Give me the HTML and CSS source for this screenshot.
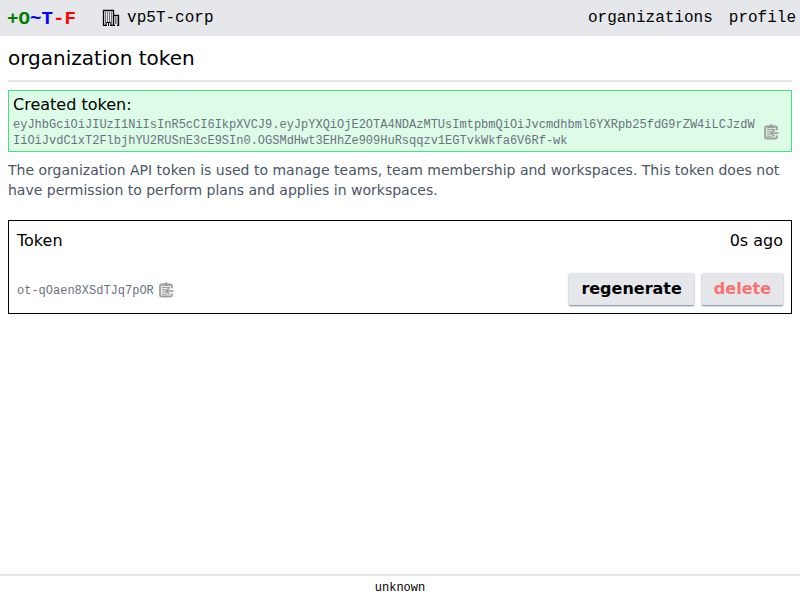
FILE: index.html
```html
<!DOCTYPE html>
<html lang="en">
<head>
<meta charset="utf-8">
<title>organization token</title>
<link rel="stylesheet" href="styles.css">
</head>
<body>
<svg width="0" height="0" class="sprite">
  <symbol id="clipboard" viewBox="0 0 16 16">
    <path d="M13 6V4Q13 2.500 11.500 2.500H2.500Q1 2.500 1 4V13Q1 14.500 2.500 14.500H11.500Q13 14.500 13 13V11.500" fill="currentColor" fill-opacity=".2" stroke="currentColor" stroke-width="1.800"/>
    <path d="M3.500 4V1.700H5.300Q7-1 8.700 1.700H10.500V4ZM3 5H11V6H3ZM3 7.200H7V8.200H3ZM3 9.500H7V10.500H3ZM3 11.700H8V12.700H3Z" fill="currentColor"/>
    <path d="M14.800 9H7.500M10.300 5.800L7 9L10.300 12.200" fill="none" stroke="currentColor" stroke-width="1.500"/>
  </symbol>
</svg>
<header class="header">
  <a class="logo"><span class="add">+O</span><span class="change">~T</span><span class="remove">-F</span></a>
  <div class="org">
    <svg class="building" viewBox="0 0 18 18">
      <path d="M1.500 17V1.500H11.500V17M11.500 6.500H16.500V17" fill="none" stroke="#000" stroke-width="1.300"/>
      <path d="M1 15.800H5V17H1ZM8 15.800H13V17H8ZM15 15.800H17V17H15ZM3.500 13H9.500V17H8.500V14H7V17H6V14H4.500V17H3.500Z"/>
      <path d="M3.500 3.500V12.500M5.500 3.500V12.500M7.500 3.500V12.500M9.500 3.500V12.500M13.500 8.500V15M15 8.500V15" fill="none" stroke="#000" stroke-width="1" stroke-dasharray="1 1"/>
    </svg>
    <span>vp5T-corp</span>
  </div>
  <nav class="nav"><a>organizations</a><a>profile</a></nav>
</header>
<main class="main">
  <h1 class="title">organization token</h1>
  <section class="flash">
    <div>Created token:</div>
    <div class="flash-row">
      <span class="token">eyJhbGciOiJIUzI1NiIsInR5cCI6IkpXVCJ9.eyJpYXQiOjE2OTA4NDAzMTUsImtpbmQiOiJvcmdhbml6YXRpb25fdG9rZW4iLCJzdWIiOiJvdC1xT2FlbjhYU2RUSnE3cE9SIn0.OGSMdHwt3EHhZe909HuRsqqzv1EGTvkWkfa6V6Rf-wk</span>
      <svg class="copy"><use href="#clipboard"/></svg>
    </div>
  </section>
  <p class="description">The organization API token is used to manage teams, team membership and workspaces. This token does not have permission to perform plans and applies in workspaces.</p>
  <section class="card">
    <div class="row"><span>Token</span><span>0s ago</span></div>
    <div class="row">
      <div class="id"><span class="token">ot-qOaen8XSdTJq7pOR</span><svg class="copy"><use href="#clipboard"/></svg></div>
      <div class="actions"><button class="btn">regenerate</button><button class="btn danger">delete</button></div>
    </div>
  </section>
</main>
<footer class="footer">unknown</footer>
</body>
</html>
```
FILE: styles.css
```css
* { box-sizing: border-box; }
body {
  margin: 0;
  min-height: 100vh;
  display: flex;
  flex-direction: column;
  font: 16px/24px "DejaVu Sans", sans-serif;
  color: #000;
  background: #fff;
}
.sprite { position: absolute; }
.header {
  height: 36px;
  display: flex;
  align-items: center;
  padding: 0 4px 0 7px;
  background: #e5e7eb;
  font-family: "Liberation Mono", monospace;
}
.logo { font-size: 19.2px; font-weight: 700; padding-top: 2px; }
.add { color: green; }
.change { color: blue; }
.remove { color: red; }
.org { display: flex; align-items: center; gap: 7px; margin-left: 26px; }
.building { width: 18px; height: 18px; }
.nav { display: flex; gap: 16px; margin-left: auto; }
.main { flex: 1; padding: 8px; }
.title {
  margin: 0 0 8px;
  padding-bottom: 8px;
  border-bottom: 2px solid #e5e7eb;
  font-size: 20px;
  line-height: 28px;
  font-weight: 400;
}
.flash {
  margin-bottom: 8px;
  padding: 2px 4px;
  border: 1px solid #4ade80;
  background: #dcfce7;
}
.flash-row { display: flex; align-items: center; padding-right: 7px; }
.flash-row .token { flex: 1; padding-right: 8px; }
.flash-row .copy { margin-bottom: 2px; }
.token {
  font: 12px/16px "Liberation Mono", monospace;
  color: #6b7280;
  word-break: break-all;
}
.copy { width: 16px; height: 16px; flex: none; color: #9f9f9f; }
.description { margin: 0 0 20px; font-size: 14px; line-height: 20px; color: #4b5563; }
.card {
  height: 94px;
  display: flex;
  flex-direction: column;
  justify-content: space-between;
  padding: 8px;
  border: 1px solid #000;
}
.row { display: flex; justify-content: space-between; align-items: center; }
.id { display: flex; align-items: center; gap: 5px; padding-top: 2px; }
.id .token { padding-top: 1px; }
.actions { display: flex; gap: 8px; }
.btn {
  height: 32px;
  padding: 0 12px;
  border: 0;
  border-radius: 1px;
  background: #e5e7eb;
  box-shadow: 0 1px 2px #708090;
  color: #000;
  font: 700 16px/24px "DejaVu Sans", sans-serif;
}
.danger { color: #f87171; }
.footer {
  height: 26px;
  border-top: 2px solid #e5e7eb;
  text-align: center;
  font: 12px/24px "Liberation Mono", monospace;
}
```
